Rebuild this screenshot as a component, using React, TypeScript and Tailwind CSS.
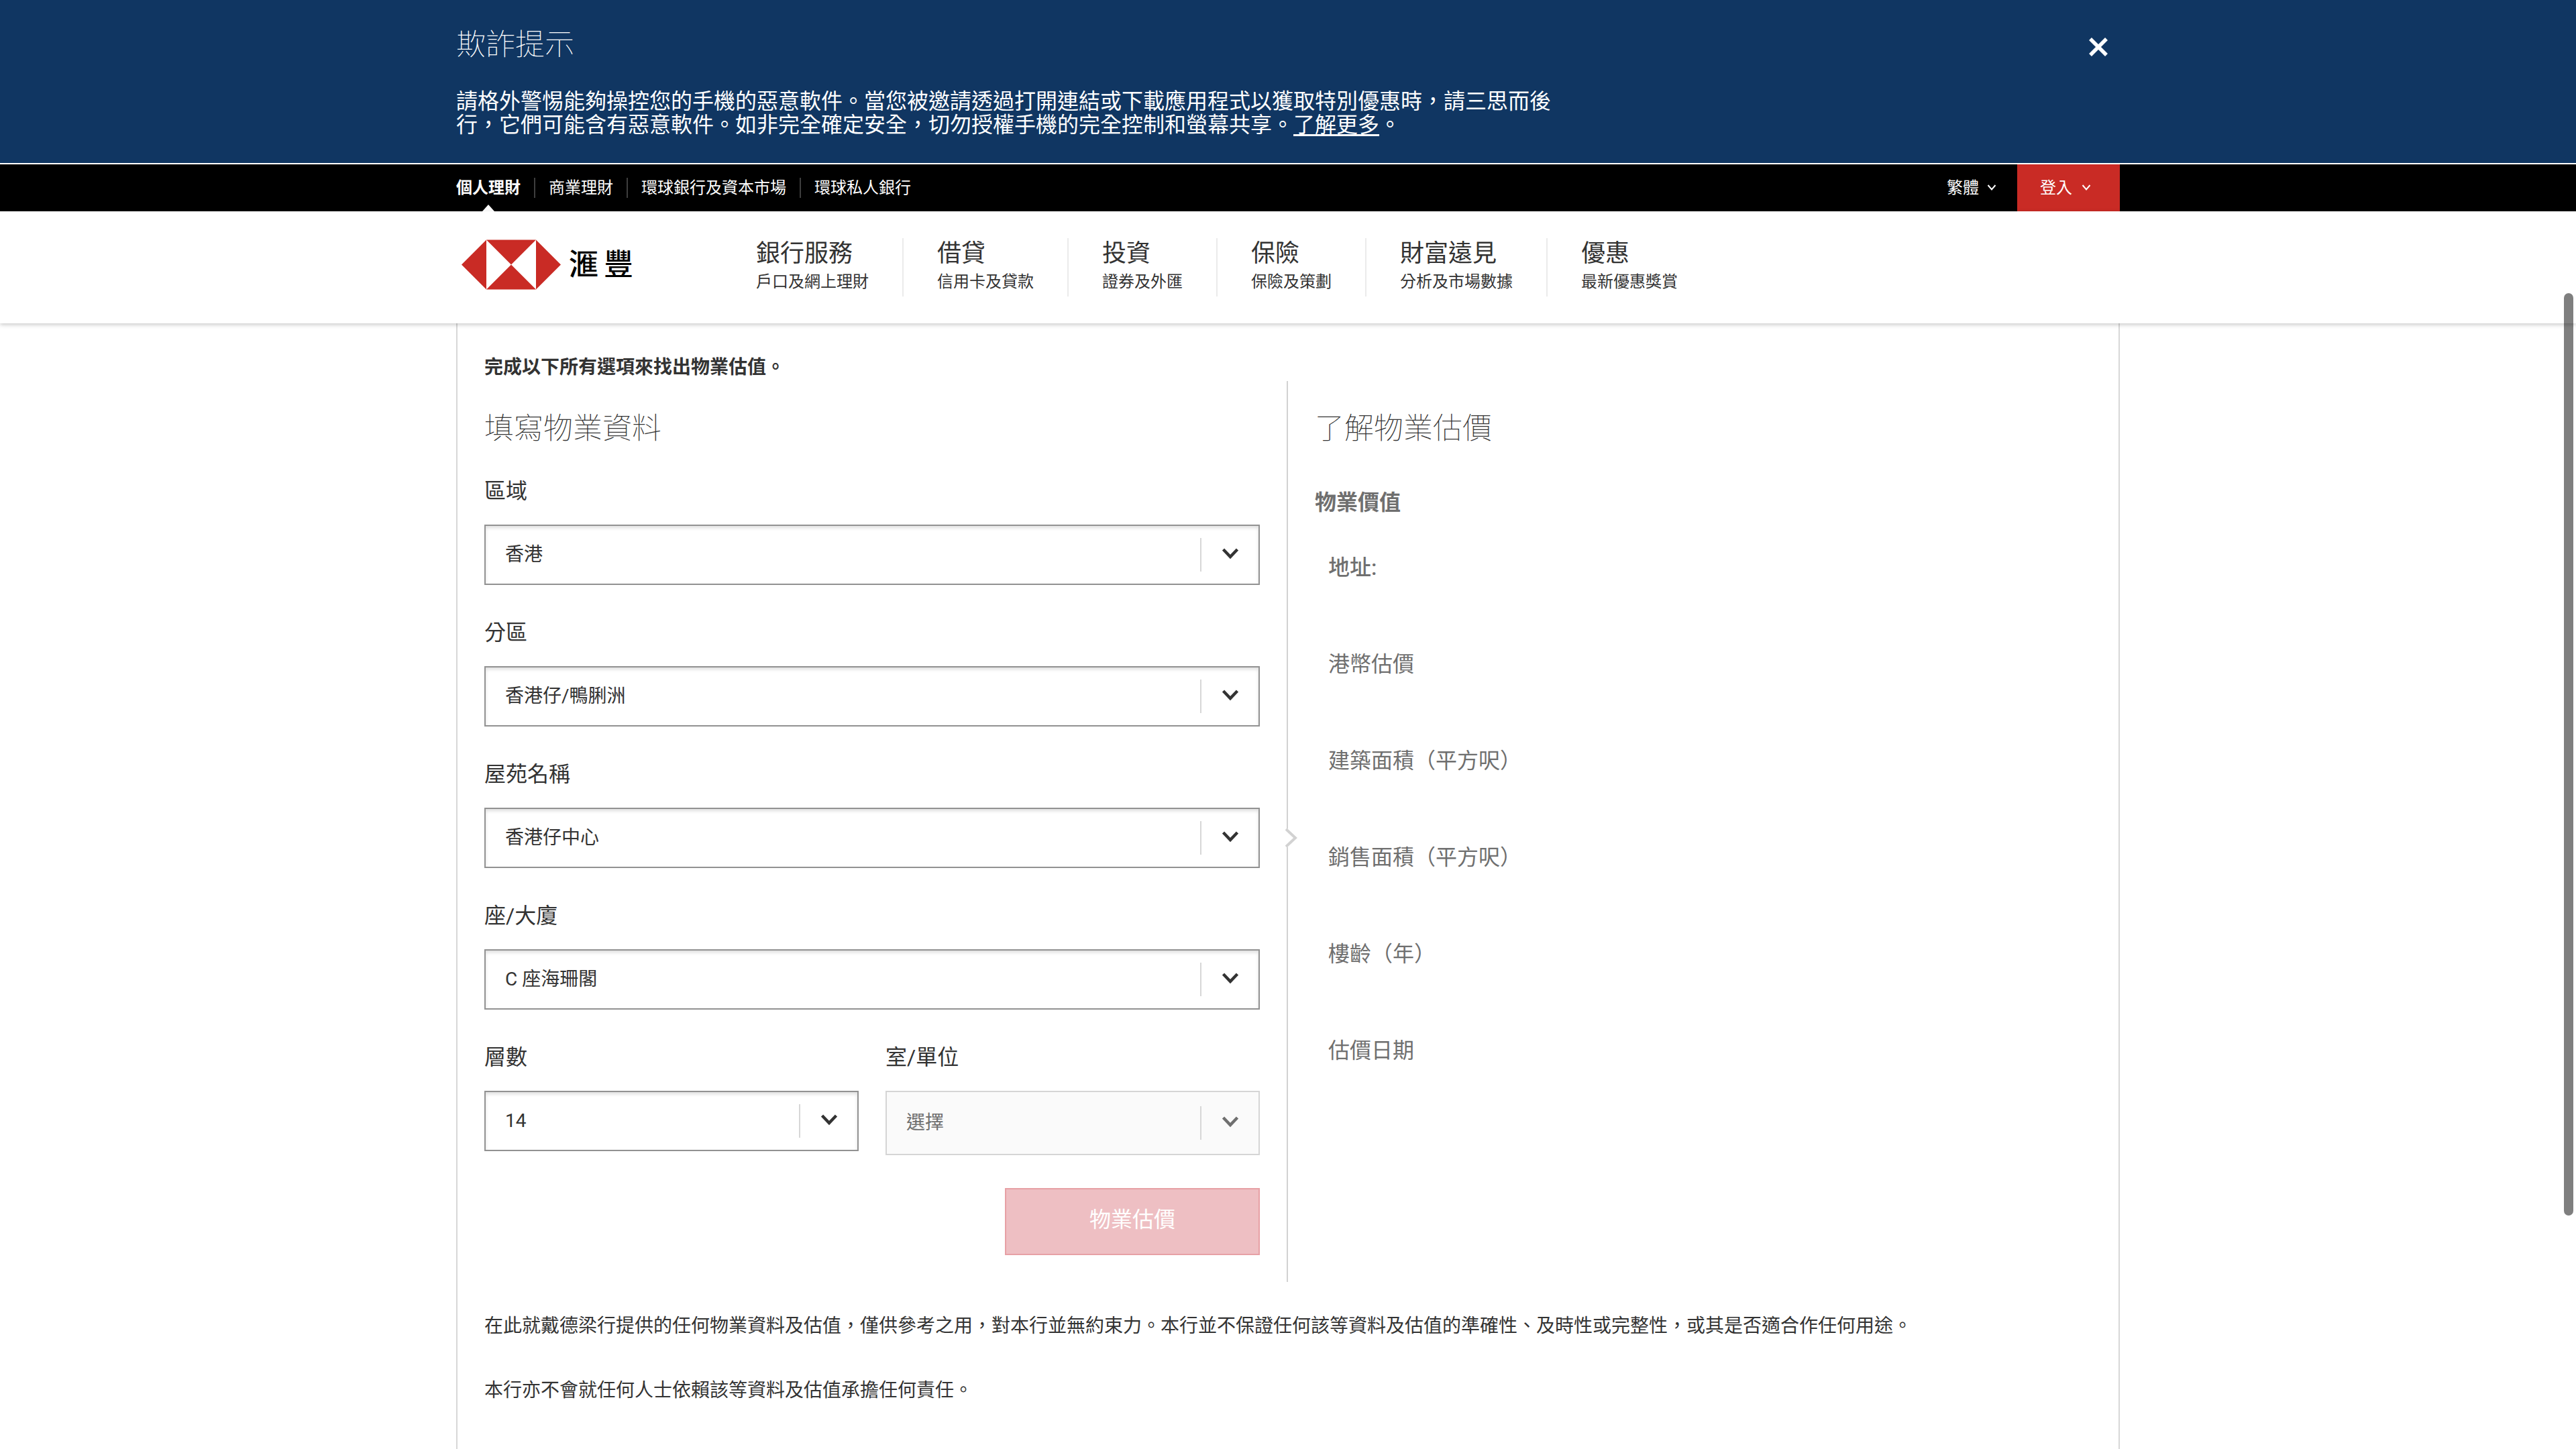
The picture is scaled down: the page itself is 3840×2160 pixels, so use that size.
import type { ReactNode } from "react";

const RED = "bg-[#c92b25]";

const sections = ["個人理財", "商業理財", "環球銀行及資本市場", "環球私人銀行"];

const menu = [
  { title: "銀行服務", note: "戶口及網上理財" },
  { title: "借貸", note: "信用卡及貸款" },
  { title: "投資", note: "證券及外匯" },
  { title: "保險", note: "保險及策劃" },
  { title: "財富遠見", note: "分析及市場數據" },
  { title: "優惠", note: "最新優惠獎賞" },
];

const results = ["港幣估價", "建築面積（平方呎）", "銷售面積（平方呎）", "樓齡（年）", "估價日期"];

function SmallChevron() {
  return (
    <svg aria-hidden="true" width="14" height="12" viewBox="0 0 14 12" fill="none" stroke="currentColor" strokeWidth="2">
      <path d="M1.5 2 7 8.5 12.5 2" />
    </svg>
  );
}

function Container({ children, className = "" }: { children: ReactNode; className?: string }) {
  return <div className={"mx-auto w-full max-w-[2480px] " + className}>{children}</div>;
}

function AlertBanner() {
  return (
    <section className="border-b-2 border-white bg-[#103662] text-white">
      <Container className="flex items-start justify-between pt-[37px] pb-[39px]">
        <div className="max-w-[1640px]">
          <h2 className="text-[44px] leading-[60px] font-thin">欺詐提示</h2>
          <p className="mt-[37px] text-[32px] leading-[35px]">
            請格外警惕能夠操控您的手機的惡意軟件。當您被邀請透過打開連結或下載應用程式以獲取特別優惠時，請三思而後行，它們可能含有惡意軟件。如非完全確定安全，切勿授權手機的完全控制和螢幕共享。
            <a href="#more" className="underline decoration-[3px] underline-offset-[3px]">了解更多</a>。
          </p>
        </div>
        <button type="button" aria-label="關閉" className="mt-[18px] mr-[17px]">
          <svg width="30" height="30" viewBox="0 0 30 30" fill="none" stroke="white" strokeWidth="5.5">
            <path d="M3 3 27 27M27 3 3 27" />
          </svg>
        </button>
      </Container>
    </section>
  );
}

function TopBar() {
  return (
    <div className="bg-black text-[24px] leading-[34px] text-white">
      <Container className="flex h-[70px] items-stretch justify-between">
        <nav aria-label="網站" className="flex items-center">
          {sections.map((name, i) => (
            <a
              key={name}
              href="#site"
              className={
                i === 0
                  ? "relative flex h-full items-center font-bold"
                  : "flex h-[30px] items-center before:mx-5 before:h-[30px] before:w-[2px] before:bg-[#3e3e3e]"
              }
            >
              {name}
              {i === 0 && (
                <svg aria-hidden="true" className="absolute bottom-0 left-1/2 -translate-x-1/2" width="18" height="10" viewBox="0 0 18 10">
                  <path d="M0 10 9 0 18 10Z" fill="white" />
                </svg>
              )}
            </a>
          ))}
        </nav>
        <div className="flex items-stretch">
          <button type="button" className="flex items-center gap-3 px-[31px]">
            繁體
            <SmallChevron />
          </button>
          <button type="button" className={"flex w-[153px] items-center gap-[14px] pl-[34px] " + RED}>
            登入
            <SmallChevron />
          </button>
        </div>
      </Container>
    </div>
  );
}

function Header() {
  return (
    <header className="relative z-10 bg-white shadow-[0_2px_6px_rgba(0,0,0,0.22)]">
      <Container className="flex h-[167px] items-start">
        <a href="#home" className="mt-[42px] ml-2 flex w-[439px] shrink-0 items-center gap-3">
          <svg aria-hidden="true" width="148" height="75" viewBox="0 0 148 74">
            <path d="M37 0 0 37 37 74ZM111 0 148 37 111 74ZM37 0H111L74 37ZM37 74H111L74 37Z" fill="#c92b25" />
          </svg>
          <span className="flex gap-2 text-[44px] leading-[60px] font-medium text-black">
            <span>滙</span>
            <span>豐</span>
          </span>
        </a>
        <nav aria-label="主選單" className="mt-10 flex">
          {menu.map((item, i) => (
            <a
              key={item.title}
              href="#menu"
              className={"block h-[87px] text-[#333333] " + (i === 0 ? "pr-[50px]" : "border-l-2 border-[#ebebeb] px-[50px]")}
            >
              <span className="block text-[36px] leading-[46px]">{item.title}</span>
              <span className="mt-[2px] block text-[24px] leading-[34px]">{item.note}</span>
            </a>
          ))}
        </nav>
      </Container>
    </header>
  );
}

function SelectField({ id, label, value, disabled = false }: { id: string; label: string; value: string; disabled?: boolean }) {
  return (
    <div>
      <label htmlFor={id} className="mb-7 block text-[32px] leading-[44px] text-[#333333]">
        {label}
      </label>
      <div className={"relative " + (disabled ? "text-[#6f6f6f]" : "text-[#333333]")}>
        <select
          id={id}
          disabled={disabled}
          className={
            "block w-full appearance-none rounded-none border-2 pl-[29px] text-[28px] opacity-100 " +
            (disabled
              ? "h-[96px] border-[#d5d5d5] bg-[#fafafa]"
              : "h-[90px] border-[#929292] bg-white shadow-[inset_0_3px_5px_rgba(0,0,0,0.13)]")
          }
        >
          <option>{value}</option>
        </select>
        <span className="pointer-events-none absolute inset-y-0 right-0 flex items-center">
          <span className="h-[50px] w-[2px] bg-[#d7d7d7]" />
          <svg className="mr-[30px] ml-[29px]" width="28" height="24" viewBox="0 0 28 24" fill="none" stroke="currentColor" strokeWidth="4.5">
            <path d="M3.5 4 14 15 24.5 4" />
          </svg>
        </span>
      </div>
    </div>
  );
}

function ValuationForm() {
  return (
    <form className="relative border-r-2 border-[#d2d2d2] pt-[41px] pr-10 pb-10">
      <h2 className="mb-[41px] text-[44px] leading-[60px] font-thin text-[#333333]">填寫物業資料</h2>
      <div className="flex flex-col gap-[49px]">
        <SelectField id="zone" label="區域" value="香港" />
        <SelectField id="district" label="分區" value="香港仔/鴨脷洲" />
        <SelectField id="estate" label="屋苑名稱" value="香港仔中心" />
        <SelectField id="block" label="座/大廈" value="C 座海珊閣" />
        <div className="grid grid-cols-2 gap-10">
          <SelectField id="floor" label="層數" value="14" />
          <SelectField id="unit" label="室/單位" value="選擇" disabled />
        </div>
      </div>
      <div className="mt-[49px] flex justify-end">
        <button
          type="button"
          disabled
          className="h-[100px] w-[380px] border-2 border-[#e7a0a5] bg-[#eebfc3] pb-[6px] text-[32px] leading-[44px] text-white"
        >
          物業估價
        </button>
      </div>
      <svg aria-hidden="true" className="absolute top-1/2 -right-[16px] -translate-y-[6px]" width="18" height="30" viewBox="0 0 18 30">
        <path d="M0 1V29H3L17 15 3 1Z" fill="white" />
        <path d="M1 2 15 15 1 28" fill="none" stroke="#d2d2d2" strokeWidth="4" />
      </svg>
    </form>
  );
}

function ValuationResult() {
  return (
    <section className="pt-[41px] pl-10 text-[32px] leading-[44px] text-[#6f6f6f]">
      <h2 className="text-[44px] leading-[60px] font-thin text-[#333333]">了解物業估價</h2>
      <h3 className="mt-[58px] font-bold">物業價值</h3>
      <ul className="mt-[53px] pl-5">
        <li className="h-[144px] font-medium">地址:</li>
        {results.map((name) => (
          <li key={name} className="h-[144px] last:h-auto">
            {name}
          </li>
        ))}
      </ul>
    </section>
  );
}

export default function App() {
  return (
    <div
      lang="zh-Hant"
      className="flex min-h-screen flex-col bg-white font-['Roboto','Noto_Sans_CJK_TC',sans-serif] text-[#333333]"
    >
      <AlertBanner />
      <TopBar />
      <Header />
      <main className="mx-auto w-full max-w-[2480px] flex-1 border-x-2 border-[#d7d7d7] px-10 pt-[46px] text-[28px] leading-[40px]">
        <p className="font-bold">完成以下所有選項來找出物業估值。</p>
        <div className="grid grid-cols-2">
          <ValuationForm />
          <ValuationResult />
        </div>
        <p className="mt-[46px]">
          在此就戴德梁行提供的任何物業資料及估值，僅供參考之用，對本行並無約束力。本行並不保證任何該等資料及估值的準確性、及時性或完整性，或其是否適合作任何用途。
        </p>
        <p className="mt-14">本行亦不會就任何人士依賴該等資料及估值承擔任何責任。</p>
      </main>
      <div aria-hidden="true" className="fixed top-[437px] right-1 z-20 h-[1375px] w-[14px] rounded-full bg-black/50" />
    </div>
  );
}
